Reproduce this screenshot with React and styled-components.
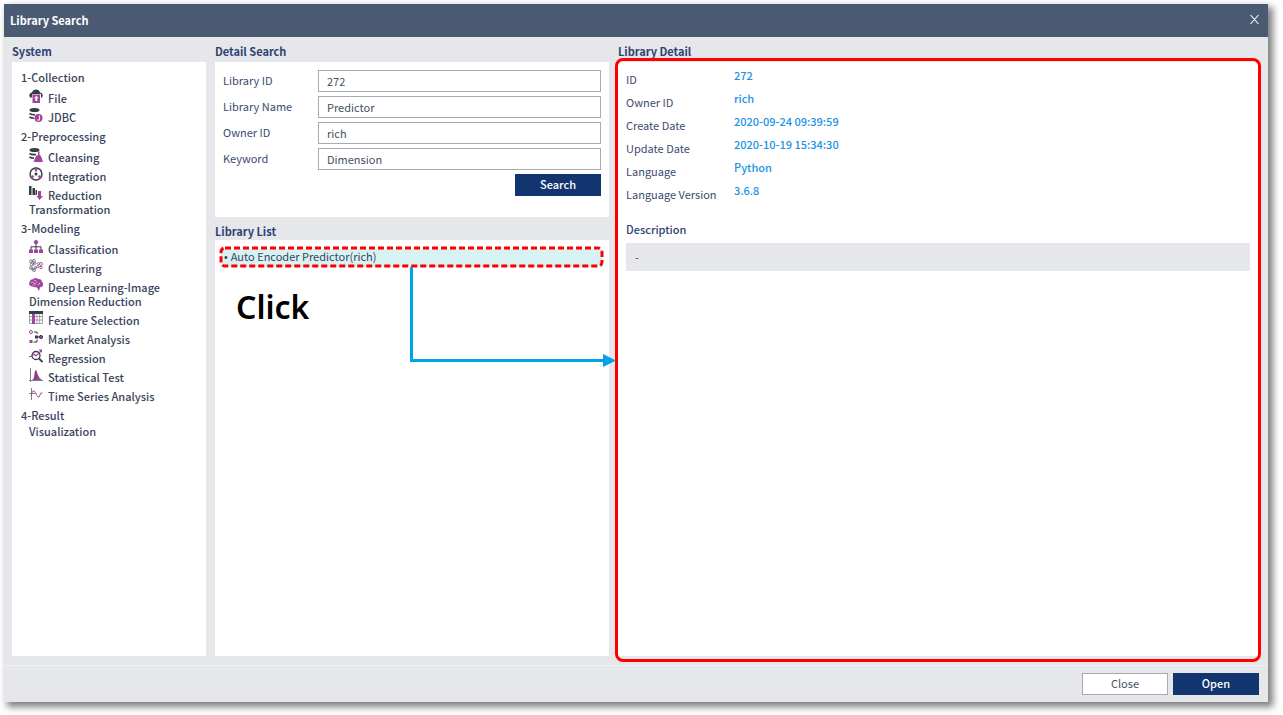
import React from "react";
import styled, { createGlobalStyle } from "styled-components";

const sans = '"Noto Sans CJK KR", "Noto Sans", sans-serif';

const GlobalStyle = createGlobalStyle`
  * { box-sizing: border-box; }
  body { margin: 0; background: #fff; font-family: ${sans}; font-size: 11px; color: #39445c; }
  button, input { font: inherit; }
`;

const Page = styled.main`
  display: flex;
  min-height: 100vh;
  padding: 4px 15px 13px 4px;
`;

const Dialog = styled.section`
  flex: 1;
  display: flex;
  flex-direction: column;
  background: #e6e7eb;
  box-shadow: 4px 4px 7px 1px rgba(0, 0, 0, 0.5);
`;

const TitleBar = styled.header`
  display: flex;
  align-items: center;
  justify-content: space-between;
  height: 33px;
  padding: 0 8px 2px 6px;
  background: #4a5a73;
  color: #fff;
`;

const Title = styled.h1`
  margin: 0;
  font-size: 11px;
  font-weight: 700;
`;

const CloseIcon = styled.button`
  display: flex;
  padding: 0;
  border: 0;
  background: none;
  color: inherit;
  cursor: pointer;
`;

const Columns = styled.div`
  flex: 1;
  display: grid;
  grid-template-columns: 194px 394fr 642fr;
  column-gap: 9px;
  padding: 5px 8px 9px;
`;

const Column = styled.section`
  display: flex;
  flex-direction: column;
  min-width: 0;
`;

const PanelTitle = styled.h2`
  margin: ${(p) => (p.$spaced ? "5px 0 0" : "0 0 2px")};
  line-height: 18px;
  font-size: 11px;
  font-weight: 700;
  color: #2f4272;
`;

const Panel = styled.div`
  position: relative;
  flex: ${(p) => (p.$fixed ? "none" : 1)};
  padding: ${(p) => p.$pad || "0"};
  background: #fff;
`;

const GroupTitle = styled.h3`
  margin: 0;
  padding: 4px 0 1px 9px;
  line-height: 16px;
  font-size: 11px;
  font-weight: 500;
`;

const TreeList = styled.ul`
  margin: 0;
  padding: 0 32px 0 17px;
  list-style: none;
`;

const TreeLink = styled.a`
  display: block;
  padding-top: ${(p) => (p.$icon ? "5px" : "0")};
  line-height: 14px;
  font-weight: 500;
  color: inherit;
  text-decoration: none;
  svg { float: left; width: 14px; height: 14px; margin: -2px 5px 0 0; }
`;

const SearchForm = styled.form`
  display: grid;
  grid-template-columns: 95px 1fr;
  grid-auto-rows: 22px;
  row-gap: 4px;
  align-items: center;
`;

const FieldLabel = styled.label`
  padding-bottom: 2px;
  line-height: 20px;
  color: #3c4a70;
`;

const TextInput = styled.input`
  width: 100%;
  height: 22px;
  padding: 0 8px 1px;
  border: 1px solid #a5aab5;
  border-radius: 0;
  background: #fff;
  color: #45505f;
`;

const ActionButton = styled.button`
  width: 86px;
  height: 22px;
  padding: 0 0 2px;
  border: 1px solid ${(p) => (p.$primary ? "#12356f" : "#a5aab5")};
  background: ${(p) => (p.$primary ? "#12356f" : "#fff")};
  color: ${(p) => (p.$primary ? "#fff" : "#45505f")};
  font-weight: ${(p) => (p.$primary ? 500 : 400)};
  line-height: 18px;
  cursor: pointer;
`;

const SearchButton = styled(ActionButton)`
  grid-column: 2;
  justify-self: end;
`;

const ResultList = styled.ul`
  margin: 0;
  padding: 0;
  list-style: none;
`;

const ResultRow = styled.li`
  position: relative;
`;

const ResultLink = styled.a`
  display: block;
  padding: 0 3px 4px;
  line-height: 14px;
  background: #d8f1f3;
  color: #39445c;
  text-decoration: none;
  &::before { content: "•"; margin-right: 3px; }
`;

const RowMarker = styled.svg`
  position: absolute;
  top: -2px;
  left: -1px;
  width: calc(100% + 3px);
  height: 21px;
  overflow: visible;
  pointer-events: none;
  rect { width: calc(100% - 3px); }
`;

const ClickNote = styled.p`
  margin: 16px 0 0 15px;
  font-family: "Noto Sans", sans-serif;
  font-size: 32px;
  font-weight: 600;
  line-height: 48px;
  color: #000;
`;

const Connector = styled.div`
  position: absolute;
  top: 27px;
  left: 195px;
  right: 4px;
  height: 95px;
  border: solid #00a2e8;
  border-width: 0 0 3px 3px;
  pointer-events: none;
  z-index: 1;
  svg { position: absolute; right: -11px; bottom: -8px; }
`;

const DetailMarker = styled.div`
  position: absolute;
  inset: -4px -1px -6px -3px;
  border: 3px solid #fe0000;
  border-radius: 8px;
  pointer-events: none;
`;

const Facts = styled.dl`
  display: grid;
  grid-template-columns: 108px 1fr;
  grid-auto-rows: 23px;
  margin: 0;
  line-height: 16px;
`;

const Term = styled.dt`
  padding-top: 4px;
  color: #3c4a70;
`;

const Value = styled.dd`
  margin: 0;
  font-weight: 500;
  color: #1b93e6;
`;

const DescriptionTitle = styled.h3`
  margin: 14px 0 4px;
  line-height: 20px;
  font-size: 11px;
  font-weight: 500;
  color: #2f4272;
`;

const Description = styled.p`
  margin: 0;
  padding: 0 9px;
  line-height: 28px;
  background: #e6e7eb;
`;

const Footer = styled.footer`
  display: flex;
  justify-content: flex-end;
  gap: 5px;
  padding: 7px 9px;
  border-top: 1px solid #f0f1f4;
`;

const P = "#a0449c";
const D = "#343d44";

const icons = {
  file: (
    <>
      <path d="M2.500 9A2.800 2.800 0 0 1 .3 6 3 3 0 0 1 3 3.400 4.300 4.300 0 0 1 7 .4a4.300 4.300 0 0 1 4 3A3 3 0 0 1 13.700 6 2.800 2.800 0 0 1 12 9V5H3.500Z" fill={D} />
      <path d="M3.500 5.500h7.500V14H3.500Z" fill={P} />
      <path d="M7.300 6.800 9.600 9.200H8.200V12H6.400V9.200H5Z" fill="#fff" />
    </>
  ),
  jdbc: (
    <>
      <ellipse cx="5.500" cy="2" rx="5" ry="2" fill={D} />
      <path d="M.5 5.500Q3 7 6 6.800M.5 9Q2.500 10.300 5 10.200" fill="none" stroke={D} strokeWidth="1.600" />
      <circle cx="9.500" cy="10" r="4" fill={P} />
      <path d="M10.500 7.500v4q-.7 1.200-2.200.3" fill="none" stroke="#fff" strokeWidth="1.100" />
    </>
  ),
  cleansing: (
    <>
      <ellipse cx="5.500" cy="2" rx="5" ry="2" fill={D} />
      <path d="M.5 5.500Q3 7 7 6.500M.5 9Q2.500 10.300 5 10.200" fill="none" stroke={D} strokeWidth="1.600" />
      <path d="M9 3.500h1.500V7l1.500 1 2 6H4.500L7 8l2-1Z" fill={P} />
    </>
  ),
  integration: (
    <>
      <circle cx="7" cy="7" r="5.900" fill="none" stroke={D} strokeWidth="1.500" />
      <circle cx="7" cy="7" r="1.500" fill={D} />
      <path d="M7 0v4.500M1.500 11 4.500 8.800M12.500 11 9.500 8.800" stroke={P} strokeWidth="2.200" />
    </>
  ),
  reduction: (
    <>
      <path d="M0 0h2.500v9H0ZM3.500 2H6v7H3.500ZM6.500 4H8v5H6.500Z" fill={D} />
      <path d="M9 5h3v5h2l-3.500 4L7.500 10H9Z" fill={P} />
    </>
  ),
  classification: (
    <>
      <path d="M7 3v7M2 10V6.800h10V10" fill="none" stroke={D} />
      <circle cx="7" cy="2.200" r="2.100" fill={P} />
      <path d="M0 9.500h4V13H0ZM5 9.500h4V13H5ZM10 9.500h4V13h-4Z" fill={P} />
    </>
  ),
  clustering: (
    <g fill="none" strokeWidth=".9">
      <g stroke="#6d747b">
        <circle cx="2" cy="2.500" r="1.500" /><circle cx="5" cy="1.800" r="1.400" />
        <circle cx="3" cy="5.500" r="1.600" /><circle cx="2" cy="9" r="1.400" />
        <circle cx="5" cy="11" r="1.500" /><circle cx="6.500" cy="8.500" r="1.200" />
        <circle cx="12" cy="5" r="1.500" /><circle cx="9.500" cy="4.500" r="1.100" />
      </g>
      <path d="m2 3 3-1M3 6l2-2M2 9l3 2 1.500-2.500" stroke="#6d747b" />
      <g stroke={P}><circle cx="6" cy="4.500" r=".9" /><circle cx="9" cy="7.500" r="1.100" /><circle cx="12" cy="8.500" r="1.200" /></g>
    </g>
  ),
  brain: (
    <>
      <path d="M1.500 8A2.500 2.500 0 0 1 .8 4 3 3 0 0 1 4 1.200 4 4 0 0 1 9 1a3.500 3.500 0 0 1 4 3A2.700 2.700 0 0 1 12.500 8.800L11 9.500 10 13 8 9.500 5 9Z" fill={P} />
      <path d="M2 5q2-2 3 0t3-1M5 2.500q2-1 2.500 1M8.500 6.500q2 .5 2.500-2M3.500 7q2-1 3 .5" fill="none" stroke="#ecd2ec" strokeWidth=".7" />
    </>
  ),
  table: (
    <>
      <path d="M.5 2v10.500h13V2M4 2v10.500M8 2v10.500M10.700 2v10.500M.5 5.500h13M.5 9h13" fill="none" stroke="#8a9096" strokeWidth=".8" />
      <path d="M3 3h3v10H3Z" fill={P} />
      <path d="M0 0h14v3H0Z" fill={D} />
    </>
  ),
  market: (
    <>
      <circle cx="2" cy="2" r="1.500" fill="none" stroke={P} />
      <path d="M5 2h3v2M8 9.500V12H4.500" fill="none" stroke={D} />
      <path d="M.5 10h3v3h-3Z" fill={P} />
      <path d="M6 5.500h3.200v3H6Z" fill={D} />
      <path d="M9 7h1.500" stroke={D} />
      <circle cx="12" cy="7" r="1.600" fill={P} stroke={D} />
    </>
  ),
  regression: (
    <>
      <circle cx="7" cy="6.500" r="4" fill="none" stroke={D} strokeWidth="1.300" />
      <path d="m10 9.500 3.500 3.500" stroke={D} strokeWidth="1.800" />
      <path d="M0 7.500h2.500L5 5l2 2 5.500-5.500" fill="none" stroke={P} strokeWidth="1.200" />
      <path d="M9.500.5H13V4Z" fill={P} />
    </>
  ),
  stats: (
    <>
      <path d="M1.500 0v14M0 12.500h14" fill="none" stroke="#7b8187" />
      <path d="M3 12q2-1 2.500-6T7 2.500 9 7t4 5Z" fill={P} />
      <path d="M7 2.500V12" stroke={D} strokeWidth=".8" />
    </>
  ),
  series: (
    <>
      <path d="M2.500 1v12M0 6.500h7" fill="none" stroke="#7b8187" />
      <path d="M2 9Q4 1 6 5t3 5q1.500 1 2-2t2.500-2" fill="none" stroke={P} strokeWidth=".9" />
    </>
  ),
};

const Icon = ({ name }) => (
  <svg viewBox="0 0 14 14" aria-hidden="true">{icons[name]}</svg>
);

const groups = [
  ["1-Collection", [["File", "file"], ["JDBC", "jdbc"]]],
  ["2-Preprocessing", [["Cleansing", "cleansing"], ["Integration", "integration"], ["Reduction Transformation", "reduction"]]],
  ["3-Modeling", [
    ["Classification", "classification"],
    ["Clustering", "clustering"],
    ["Deep Learning-Image Dimension Reduction", "brain"],
    ["Feature Selection", "table"],
    ["Market Analysis", "market"],
    ["Regression", "regression"],
    ["Statistical Test", "stats"],
    ["Time Series Analysis", "series"],
  ]],
  ["4-Result", [["Visualization", null]]],
];

const fields = [
  ["library-id", "Library ID", "272"],
  ["library-name", "Library Name", "Predictor"],
  ["owner-id", "Owner ID", "rich"],
  ["keyword", "Keyword", "Dimension"],
];

const facts = [
  ["ID", "272"],
  ["Owner ID", "rich"],
  ["Create Date", "2020-09-24 09:39:59"],
  ["Update Date", "2020-10-19 15:34:30"],
  ["Language", "Python"],
  ["Language Version", "3.6.8"],
];

export default function App() {
  return (
    <Page>
      <GlobalStyle />
      <Dialog role="dialog" aria-labelledby="dialog-title">
        <TitleBar>
          <Title id="dialog-title">Library Search</Title>
          <CloseIcon type="button" aria-label="Close dialog">
            <svg width="11" height="11" viewBox="0 0 11 11">
              <path d="m1.500 1 8 9M9.500 1l-8 9" stroke="currentColor" strokeWidth="1.100" />
            </svg>
          </CloseIcon>
        </TitleBar>

        <Columns>
          <Column>
            <PanelTitle>System</PanelTitle>
            <Panel $pad="3px 0">
              {groups.map(([name, items]) => (
                <React.Fragment key={name}>
                  <GroupTitle>{name}</GroupTitle>
                  <TreeList>
                    {items.map(([label, icon]) => (
                      <li key={label}>
                        <TreeLink href="#" $icon={icon}>
                          {icon && <Icon name={icon} />}
                          {label}
                        </TreeLink>
                      </li>
                    ))}
                  </TreeList>
                </React.Fragment>
              ))}
            </Panel>
          </Column>

          <Column>
            <PanelTitle>Detail Search</PanelTitle>
            <Panel $fixed $pad="8px 8px 21px">
              <SearchForm onSubmit={(e) => e.preventDefault()}>
                {fields.map(([id, label, value]) => (
                  <React.Fragment key={id}>
                    <FieldLabel htmlFor={id}>{label}</FieldLabel>
                    <TextInput id={id} type="text" defaultValue={value} />
                  </React.Fragment>
                ))}
                <SearchButton type="submit" $primary>Search</SearchButton>
              </SearchForm>
            </Panel>
            <PanelTitle $spaced>Library List</PanelTitle>
            <Panel $pad="9px 7px 0 6px">
              <ResultList>
                <ResultRow>
                  <ResultLink href="#">Auto Encoder Predictor(rich)</ResultLink>
                  <RowMarker aria-hidden="true">
                    <rect x="1" y="1" height="18" rx="4" fill="none" stroke="#fe0000" strokeWidth="3" strokeDasharray="6 3" />
                  </RowMarker>
                </ResultRow>
              </ResultList>
              <ClickNote>Click</ClickNote>
              <Connector>
                <svg width="13" height="13" viewBox="0 0 13 13" aria-hidden="true">
                  <path d="M0 0 13 6.500 0 13Z" fill="#00a2e8" />
                </svg>
              </Connector>
            </Panel>
          </Column>

          <Column>
            <PanelTitle>Library Detail</PanelTitle>
            <Panel $pad="5px 10px 0 8px">
              <Facts>
                {facts.map(([term, value]) => (
                  <React.Fragment key={term}>
                    <Term>{term}</Term>
                    <Value>{value}</Value>
                  </React.Fragment>
                ))}
              </Facts>
              <DescriptionTitle>Description</DescriptionTitle>
              <Description>-</Description>
              <DetailMarker />
            </Panel>
          </Column>
        </Columns>

        <Footer>
          <ActionButton type="button">Close</ActionButton>
          <ActionButton type="button" $primary>Open</ActionButton>
        </Footer>
      </Dialog>
    </Page>
  );
}
